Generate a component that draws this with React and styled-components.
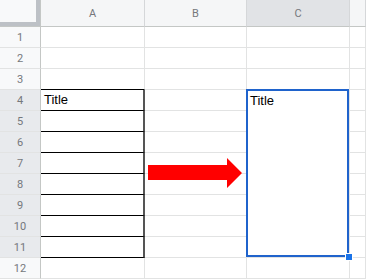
import React from "react";
import styled, { createGlobalStyle } from "styled-components";

const GlobalStyle = createGlobalStyle`
  html, body {
    margin: 0;
    padding: 0;
    background: #fff;
    overflow: hidden;
  }
  body {
    font-family: Arial, "Liberation Sans", sans-serif;
  }
`;

const COLS = ["A", "B", "C", "D"];
const ROWS = [1, 2, 3, 4, 5, 6, 7, 8, 9, 10, 11, 12];

const Sheet = styled.div`
  position: relative;
  width: 366px;
  height: 279px;
  overflow: hidden;
  display: grid;
  grid-template-columns: 41px 104px 102px 103px 1fr;
  grid-template-rows: 27px repeat(12, 21px);
`;

const Cell = styled.div`
  box-sizing: border-box;
  border-right: 1px solid #e2e3e3;
  border-bottom: 1px solid #e2e3e3;
  background: #fff;
  font-size: 13px;
  color: #000;
  padding: 0 3px 3px;
  display: flex;
  align-items: flex-end;
  white-space: nowrap;

  ${(p) => p.$boxed && `
    border-bottom: 1px solid #000;
    border-right: 2px solid #555;
  `}
  ${(p) => p.$topEdge && `
    border-bottom: 1px solid #000;
  `}
`;

const Corner = styled.div`
  box-sizing: border-box;
  background: #f8f9fa;
  border-right: 1px solid #c4c7c5;
  border-bottom: 1px solid #c4c7c5;
  position: relative;

  &::after {
    content: "";
    position: absolute;
    top: 0;
    left: 0;
    right: 0;
    bottom: 0;
    border-right: 4px solid #bdc1c6;
    border-bottom: 4px solid #bdc1c6;
  }
`;

const ColHeader = styled.div`
  box-sizing: border-box;
  background: ${(p) => (p.$active ? "#e1e3e6" : "#f5f6f7")};
  border-right: 1px solid #d5d7d9;
  border-bottom: 1px solid #c4c7c5;
  display: flex;
  align-items: center;
  justify-content: center;
  font-family: Roboto, Arial, sans-serif;
  font-size: 11px;
  color: #75787c;
  padding-top: 1px;
`;

const RowHeader = styled.div`
  box-sizing: border-box;
  background: ${(p) => (p.$active ? "#e8eaed" : "#f8f9fa")};
  border-right: 1px solid #c4c7c5;
  border-bottom: 1px solid #e2e3e3;
  display: flex;
  align-items: center;
  justify-content: center;
  font-family: Roboto, Arial, sans-serif;
  font-size: 11px;
  color: #75787c;
`;

const Merged = styled.div`
  box-sizing: border-box;
  grid-column: 4;
  grid-row: 5 / 13;
  position: relative;
  border-right: 1px solid #e2e3e3;
  border-bottom: 1px solid #e2e3e3;
  background: #fff;
  font-size: 13px;
  color: #000;
  padding: 3px 3px;

  &::after {
    content: "";
    position: absolute;
    top: -1px;
    left: -1px;
    right: 0;
    bottom: 0;
    border: 2px solid #1f63cc;
    pointer-events: none;
  }
`;

const Handle = styled.span`
  position: absolute;
  right: -4px;
  bottom: -4px;
  width: 6px;
  height: 6px;
  background: #1a73e8;
  border: 1px solid #fff;
  z-index: 2;
`;

const Arrow = styled.svg`
  position: absolute;
  left: 148px;
  top: 157px;
  width: 96px;
  height: 32px;
`;

export default function App() {
  return (
    <>
      <GlobalStyle />
      <Sheet>
        <Corner />
        {COLS.map((c) => (
          <ColHeader key={c} $active={c === "C"}>
            {c === "D" ? "" : c}
          </ColHeader>
        ))}
        {ROWS.map((r) => {
          const inBox = r >= 4 && r <= 11;
          return (
            <React.Fragment key={r}>
              <RowHeader $active={inBox}>{r}</RowHeader>
              <Cell $boxed={inBox} $topEdge={r === 3}>
                {r === 4 ? "Title" : ""}
              </Cell>
              <Cell />
              {inBox ? (
                r === 4 ? (
                  <Merged>
                    Title
                    <Handle />
                  </Merged>
                ) : null
              ) : (
                <Cell />
              )}
              <Cell />
            </React.Fragment>
          );
        })}
        <Arrow viewBox="0 0 96 32">
          <polygon
            points="0,8 79,8 79,1 94,16 79,31 79,23 0,23"
            fill="#ff0000"
          />
        </Arrow>
      </Sheet>
    </>
  );
}
